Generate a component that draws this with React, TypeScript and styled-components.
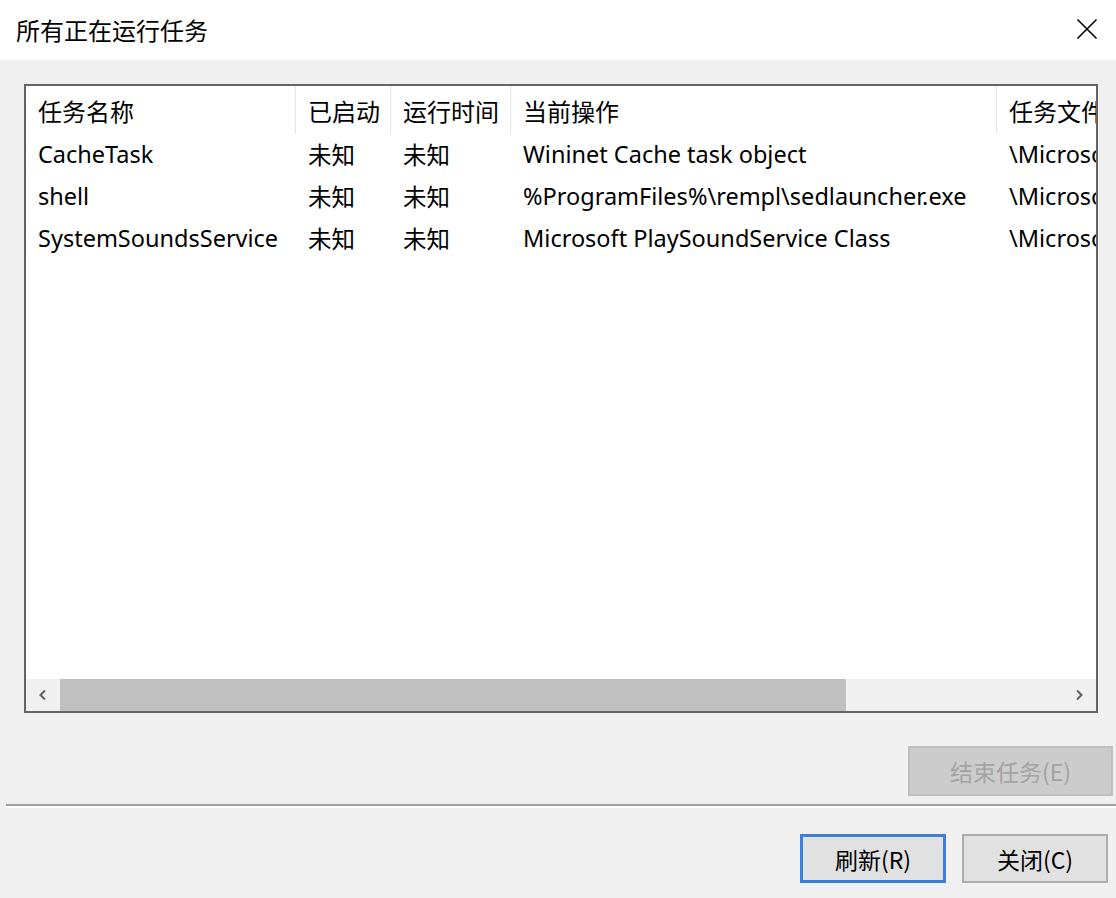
import React from "react";
import styled, { createGlobalStyle } from "styled-components";

const GlobalStyle = createGlobalStyle`
  html, body {
    margin: 0;
    padding: 0;
    background: #f0f0f0;
  }
  body {
    font-family: "Noto Sans", "Noto Sans CJK SC", sans-serif;
    color: #000;
  }
`;

type Column = { title: string; width: number };

const columns: Column[] = [
  { title: "任务名称", width: 270 },
  { title: "已启动", width: 95 },
  { title: "运行时间", width: 120 },
  { title: "当前操作", width: 486 },
  { title: "任务文件夹", width: 260 },
];

const tasks = [
  ["CacheTask", "未知", "未知", "Wininet Cache task object", "\\Microsoft\\Windows\\Wininet"],
  ["shell", "未知", "未知", "%ProgramFiles%\\rempl\\sedlauncher.exe", "\\Microsoft\\Windows\\rempl"],
  ["SystemSoundsService", "未知", "未知", "Microsoft PlaySoundService Class", "\\Microsoft\\Windows\\Multimedia"],
];

const App = () => {
  return (
    <>
      <GlobalStyle />
      <Window>
        <TitleBar>
          <Title>所有正在运行任务</Title>
          <CloseButton aria-label="close">
            <svg width="24" height="24" viewBox="0 0 24 24">
              <path d="M2.5 2.5 L21.5 21.5 M21.5 2.5 L2.5 21.5" stroke="#000" strokeWidth="1.6" fill="none" />
            </svg>
          </CloseButton>
        </TitleBar>
        <Body>
          <ListBox>
            <Grid>
              <HeaderRow>
                {columns.map((c) => (
                  <HeaderCell key={c.title} $width={c.width}>
                    {c.title}
                  </HeaderCell>
                ))}
              </HeaderRow>
              {tasks.map((row) => (
                <Row key={row[0]}>
                  {row.map((cell, i) => (
                    <Cell key={i} $width={columns[i].width}>
                      {cell}
                    </Cell>
                  ))}
                </Row>
              ))}
            </Grid>
            <HScroll>
              <ArrowBox>
                <svg width="10" height="12" viewBox="0 0 10 12">
                  <path d="M7 1.5 L2.5 6 L7 10.5" stroke="#606060" strokeWidth="2" fill="none" />
                </svg>
              </ArrowBox>
              <Track>
                <Thumb />
              </Track>
              <ArrowBox>
                <svg width="10" height="12" viewBox="0 0 10 12">
                  <path d="M3 1.5 L7.5 6 L3 10.5" stroke="#606060" strokeWidth="2" fill="none" />
                </svg>
              </ArrowBox>
            </HScroll>
          </ListBox>
          <EndRow>
            <DialogButton disabled>结束任务(E)</DialogButton>
          </EndRow>
          <Separator />
          <Footer>
            <DialogButton $primary>刷新(R)</DialogButton>
            <DialogButton>关闭(C)</DialogButton>
          </Footer>
        </Body>
      </Window>
    </>
  );
};

export default App;

const Window = styled.div`
  width: 1116px;
  height: 898px;
  display: flex;
  flex-direction: column;
  background: #f0f0f0;
  overflow: hidden;
`;

const TitleBar = styled.div`
  height: 60px;
  background: #fff;
  display: flex;
  align-items: center;
  justify-content: space-between;
  padding: 0 17px 2px 16px;
  box-sizing: border-box;
`;

const Title = styled.div`
  font-size: 24px;
  font-family: "Noto Sans CJK SC", sans-serif;
`;

const CloseButton = styled.button`
  border: none;
  background: transparent;
  padding: 0;
  width: 24px;
  height: 24px;
  display: flex;
`;

const Body = styled.div`
  flex: 1;
  display: flex;
  flex-direction: column;
  padding-top: 24px;
`;

const ListBox = styled.div`
  margin-left: 24px;
  width: 1074px;
  height: 629px;
  box-sizing: border-box;
  border: 2px solid #646464;
  background: #fff;
  display: flex;
  flex-direction: column;
  overflow: hidden;
`;

const Grid = styled.div`
  flex: 1;
  overflow: hidden;
  font-size: 23.5px;
`;

const HeaderRow = styled.div`
  display: flex;
  height: 48px;
  white-space: nowrap;
`;

const HeaderCell = styled.div<{ $width: number }>`
  flex: 0 0 ${(p) => p.$width}px;
  box-sizing: border-box;
  padding-left: 12px;
  border-right: 1px solid #e5e5e5;
  display: flex;
  align-items: center;
  font-size: 24px;
  font-family: "Noto Sans CJK SC", sans-serif;
`;

const Row = styled.div`
  display: flex;
  height: 42px;
  white-space: nowrap;
  position: relative;
  top: -1px;
`;

const Cell = styled.div<{ $width: number }>`
  flex: 0 0 ${(p) => p.$width}px;
  box-sizing: border-box;
  padding-left: 12px;
  display: flex;
  align-items: center;
  overflow: hidden;
  font-family: "Noto Sans", "Noto Sans CJK SC", sans-serif;
`;

const HScroll = styled.div`
  height: 32px;
  display: flex;
  background: #f0f0f0;
`;

const ArrowBox = styled.div`
  flex: 0 0 34px;
  display: flex;
  align-items: center;
  justify-content: center;
`;

const Track = styled.div`
  flex: 1;
  display: flex;
`;

const Thumb = styled.div`
  width: 786px;
  background: #c0c0c0;
`;

const EndRow = styled.div`
  display: flex;
  justify-content: flex-end;
  padding: 33px 3px 0 0;
`;

const Separator = styled.div`
  margin: 8px 0 0 6px;
  height: 2px;
  background: #a0a0a0;
  border-bottom: 2px solid #fff;
`;

const Footer = styled.div`
  display: flex;
  justify-content: flex-end;
  gap: 16px;
  padding: 26px 8px 0 0;
`;

const DialogButton = styled.button<{ $primary?: boolean }>`
  box-sizing: border-box;
  width: ${(p) => (p.disabled ? 205 : 146)}px;
  height: ${(p) => (p.disabled ? 50 : 49)}px;
  font-family: "Noto Sans CJK SC", sans-serif;
  font-size: 23px;
  color: #000;
  background: #e1e1e1;
  border: ${(p) => (p.$primary ? "3px solid #3c7fd7" : "2px solid #adadad")};
  padding: 0;

  &:disabled {
    background: #cccccc;
    border: 2px solid #bfbfbf;
    color: #a3a3a3;
  }
`;
